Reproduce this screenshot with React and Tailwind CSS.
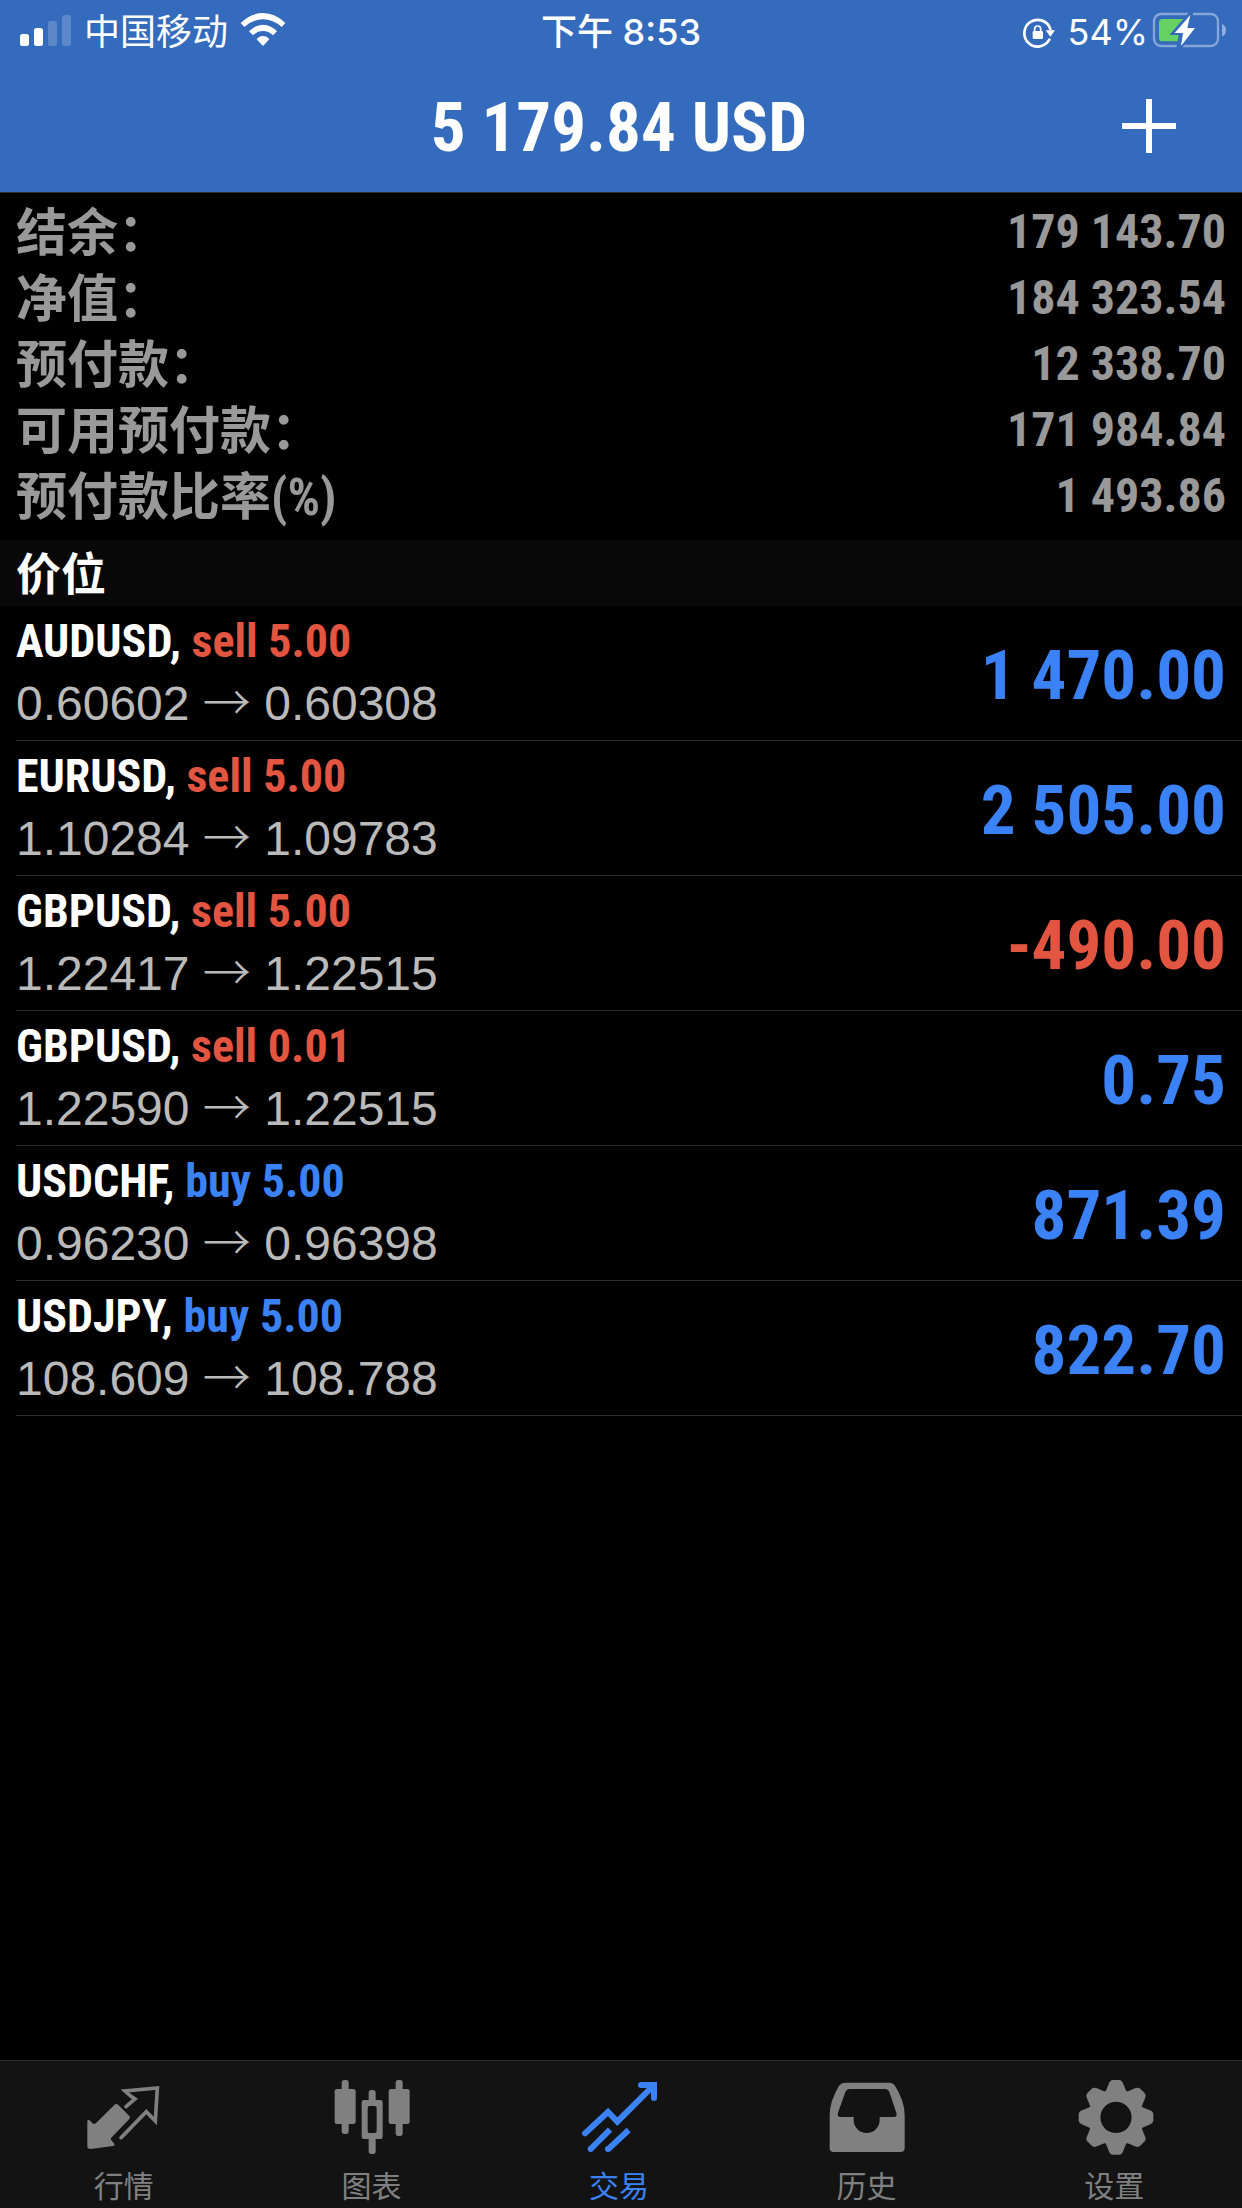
import React from "react";

const NARROW = "font-['Roboto_Condensed','Noto_Sans_CJK_SC',sans-serif]";
const CJK = "font-['Noto_Sans_CJK_SC',sans-serif]";
const STATUS = "font-['Inter','Noto_Sans_CJK_SC',sans-serif]";

const summary = [
  ["结余：", "179 143.70"],
  ["净值：", "184 323.54"],
  ["预付款：", "12 338.70"],
  ["可用预付款：", "171 984.84"],
  ["预付款比率(%)", "1 493.86"],
];

const positions = [
  { symbol: "AUDUSD", side: "sell", volume: "5.00", open: "0.60602", now: "0.60308", profit: "1 470.00" },
  { symbol: "EURUSD", side: "sell", volume: "5.00", open: "1.10284", now: "1.09783", profit: "2 505.00" },
  { symbol: "GBPUSD", side: "sell", volume: "5.00", open: "1.22417", now: "1.22515", profit: "-490.00" },
  { symbol: "GBPUSD", side: "sell", volume: "0.01", open: "1.22590", now: "1.22515", profit: "0.75" },
  { symbol: "USDCHF", side: "buy", volume: "5.00", open: "0.96230", now: "0.96398", profit: "871.39" },
  { symbol: "USDJPY", side: "buy", volume: "5.00", open: "108.609", now: "108.788", profit: "822.70" },
];

function SignalIcon() {
  return (
    <svg viewBox="0 0 52 34" className="h-[34px] w-[52px]" fill="#fff" aria-hidden="true">
      <rect x="0" y="19" width="9" height="12" rx="2.5" />
      <rect x="14" y="13" width="9" height="18" rx="2.5" />
      <rect x="28" y="6" width="9" height="25" rx="2.5" opacity="0.2" />
      <rect x="42" y="0" width="9" height="31" rx="2.5" opacity="0.2" />
    </svg>
  );
}

function WifiIcon() {
  return (
    <svg viewBox="729 39 138 114" className="h-[38px] w-[46px]" fill="#fff" aria-hidden="true">
      <path d="M731 69 Q762 39 798 39 Q834 39 865 69 L854 81 Q828 58 798 58 Q768 58 742 81 Z" />
      <path d="M756 94 Q775 74 798 74 Q821 74 840 94 L828 106 Q815 93 798 93 Q781 93 768 106 Z" />
      <path d="M779 118 Q787 108 798 108 Q809 108 817 118 L798 138 Z" />
    </svg>
  );
}

function RotationLockIcon() {
  return (
    <svg viewBox="549 48 102 93" className="h-[31px] w-[34px]" aria-hidden="true">
      <path d="M631 116 A40 40 0 1 1 634 84" fill="none" stroke="#fff" strokeWidth="8" strokeLinecap="round" />
      <path d="M620 88 H648 L634 107 Z" fill="#fff" />
      <rect x="581" y="90" width="31" height="24" rx="4" fill="#fff" />
      <path d="M587 92 V84 A9 9 0 0 1 605 84 V92" fill="none" stroke="#fff" strokeWidth="5" />
    </svg>
  );
}

function BatteryIcon() {
  return (
    <svg viewBox="936 36 222 120" className="h-[40px] w-[74px]" aria-hidden="true">
      <rect x="942" y="42" width="192" height="96" rx="21" fill="none" stroke="#fff" strokeOpacity="0.4" strokeWidth="7" />
      <path d="M1146 72 Q1158 76 1158 91 Q1158 106 1146 109 Z" fill="#fff" fillOpacity="0.45" />
      <path d="M968 57 H1030 V124 H968 Q957 124 957 113 V68 Q957 57 968 57 Z" fill="#67d264" />
      <path d="M1048 36 L988 105 H1016 L1009 144 H1026 L1072 80 H1050 L1060 36 Z" fill="#346bbd" />
      <path d="M1051 45 L1004 99 H1029 L1023 138 L1065 84 H1042 Z" fill="#fff" />
    </svg>
  );
}

function QuotesIcon() {
  return (
    <svg viewBox="251 108 240 240" className="size-20" aria-hidden="true">
      <path
        d="M347 192 Q351 192 355 196 L387 228 Q390 232 387 237 L332 294 V299 L342 311 Q344 316 339 318 L270 327 Q261 327 261 319 V242 Q264 238 268 241 L278 251 H285 L341 196 Q344 192 347 192 Z"
        fill="currentColor"
      />
      <path
        d="M377 200 L404 177 L392 169 L374 153 L471 144 L465 243 L438 215 L362 293"
        fill="none"
        stroke="currentColor"
        strokeWidth="11"
        strokeLinecap="round"
      />
    </svg>
  );
}

function ChartIcon() {
  return (
    <svg viewBox="994 108 240 240" className="size-20" fill="currentColor" aria-hidden="true">
      <rect x="1026" y="120" width="21" height="162" rx="8" />
      <rect x="1005" y="147" width="63" height="105" rx="7" />
      <rect x="1188" y="120" width="21" height="168" rx="8" />
      <rect x="1167" y="147" width="63" height="105" rx="7" />
      <rect x="1107" y="150" width="21" height="36" rx="8" />
      <rect x="1107" y="288" width="21" height="54" rx="8" />
      <path
        fillRule="evenodd"
        d="M1093 180 H1142 Q1149 180 1149 187 V290 Q1149 297 1142 297 H1093 Q1086 297 1086 290 V187 Q1086 180 1093 180 Z M1110 198 Q1104 198 1104 205 V272 Q1104 279 1110 279 H1125 Q1131 279 1131 272 V205 Q1131 198 1125 198 Z"
      />
    </svg>
  );
}

function TradeIcon() {
  return (
    <svg viewBox="477 108 240 240" className="size-20" fill="none" stroke="currentColor" strokeWidth="18" aria-hidden="true">
      <path d="M495 280 L564 216 L592 245 L694 143" strokeLinecap="round" />
      <path d="M663 135 H702 V174" strokeLinecap="round" />
      <path d="M570 269 L512 327 M626 270 L564 328" />
      <path d="M512 327 V327.1 M564 327 V327.1" strokeLinecap="round" />
    </svg>
  );
}

function HistoryIcon() {
  return (
    <svg viewBox="22 108 240 240" className="size-20" fill="currentColor" aria-hidden="true">
      <path
        fillRule="evenodd"
        d="M76 128 H210 Q220 128 226 137 Q255 184 255 225 V324 Q255 336 243 336 H42 Q30 336 30 324 V225 Q30 184 58 137 Q65 128 76 128 Z M90 147 Q81 147 77 156 L55 218 Q51 231 64 231 H102 V240 A39 39 0 0 0 180 240 V231 H222 Q234 231 230 218 L209 156 Q205 147 196 147 Z"
      />
    </svg>
  );
}

function SettingsIcon() {
  return (
    <svg viewBox="763 108 240 240" className="size-20" fill="currentColor" aria-hidden="true">
      <g>
        {[0, 45, 90, 135, 180, 225, 270, 315].map((a) => (
          <path
            key={a}
            transform={`rotate(${a} 889 232)`}
            d="M854 160 Q862 147 867 132 Q871 120 880 120 H898 Q907 120 911 132 Q916 147 924 160 Z"
          />
        ))}
      </g>
      <path fillRule="evenodd" d="M889 150 A82 82 0 1 1 888.9 150 Z M889 185 A47 47 0 1 0 889.1 185 Z" />
    </svg>
  );
}

const tabs = [
  { label: "行情", Icon: QuotesIcon },
  { label: "图表", Icon: ChartIcon },
  { label: "交易", Icon: TradeIcon, active: true },
  { label: "历史", Icon: HistoryIcon },
  { label: "设置", Icon: SettingsIcon },
];

function Header() {
  return (
    <header className="border-b border-[#2b2b2b] bg-[#346bbd] text-white">
      <div className={`${STATUS} grid h-16 grid-cols-3 items-center px-4 text-[36px] leading-[64px]`}>
        <div className="ml-1 flex items-center gap-3">
          <SignalIcon />
          <span>中国移动</span>
          <WifiIcon />
        </div>
        <div className="text-center font-medium">下午 8:53</div>
        <div className="flex items-center justify-end">
          <RotationLockIcon />
          <span className="ml-3">54%</span>
          <span className="ml-1">
            <BatteryIcon />
          </span>
        </div>
      </div>
      <div className="grid h-32 grid-cols-[1fr_auto_1fr] items-center pr-1">
        <h1 className={`${NARROW} col-start-2 text-[69px] leading-[128px] font-bold`}>5 179.84 USD</h1>
        <button type="button" aria-label="新订单" className="mr-15 justify-self-end p-0">
          <svg viewBox="0 0 58 58" className="size-[58px]" stroke="#fff" strokeWidth="6" aria-hidden="true">
            <path d="M29 0 V54 M2 27 H56" />
          </svg>
        </button>
      </div>
    </header>
  );
}

function Position({ p }) {
  const sideColor = p.side === "sell" ? "text-[#e25541]" : "text-[#3b82f7]";
  const profitColor = p.profit.startsWith("-") ? "text-[#e25541]" : "text-[#3b82f7]";
  return (
    <li className="ml-4 flex h-[135px] items-center justify-between border-b border-[#2b2b2b] pr-4">
      <div className="flex flex-col">
        <div className={`${NARROW} text-[46px] leading-[62px] font-bold text-white`}>
          {p.symbol}, <span className={sideColor}>{p.side} {p.volume}</span>
        </div>
        <div className="font-['Liberation_Sans',sans-serif] text-[48px] leading-[64px] text-[#bababa]">
          {p.open} <span className={`${CJK} leading-none font-light`}>→</span> {p.now}
        </div>
      </div>
      <div className={`${NARROW} pt-[6px] text-[69px] leading-[128px] font-bold ${profitColor}`}>{p.profit}</div>
    </li>
  );
}

export default function App() {
  return (
    <div className="flex min-h-screen flex-col bg-black" lang="zh-CN">
      <Header />
      <main className="flex-1">
        <dl className="px-4 pt-[6px] pb-[11px] text-[#999999]">
          {summary.map(([label, value]) => (
            <div key={label} className="flex h-[66px] items-center justify-between">
              <dt className={`${NARROW} pt-1 text-[51px] leading-[66px] font-bold`}>{label}</dt>
              <dd className={`${NARROW} text-[48px] leading-[66px] font-bold`}>{value}</dd>
            </div>
          ))}
        </dl>
        <h2 className={`${CJK} bg-[#080808] px-4 pb-[2px] text-[45px] leading-[64px] font-bold text-white`}>价位</h2>
        <ul>
          {positions.map((p, i) => (
            <Position key={i} p={p} />
          ))}
        </ul>
      </main>
      <nav className="grid grid-cols-5 border-t border-[#2b2b2b] bg-[#131313] pr-1">
        {tabs.map(({ label, Icon, active }) => (
          <a
            key={label}
            href="#"
            aria-current={active ? "page" : undefined}
            className={`flex flex-col items-center pt-[15px] pb-[2px] ${active ? "text-[#3b82f7]" : "text-[#808080]"}`}
          >
            <Icon />
            <span className={`${CJK} mt-[6px] text-[30px] leading-[44px]`}>{label}</span>
          </a>
        ))}
      </nav>
    </div>
  );
}
